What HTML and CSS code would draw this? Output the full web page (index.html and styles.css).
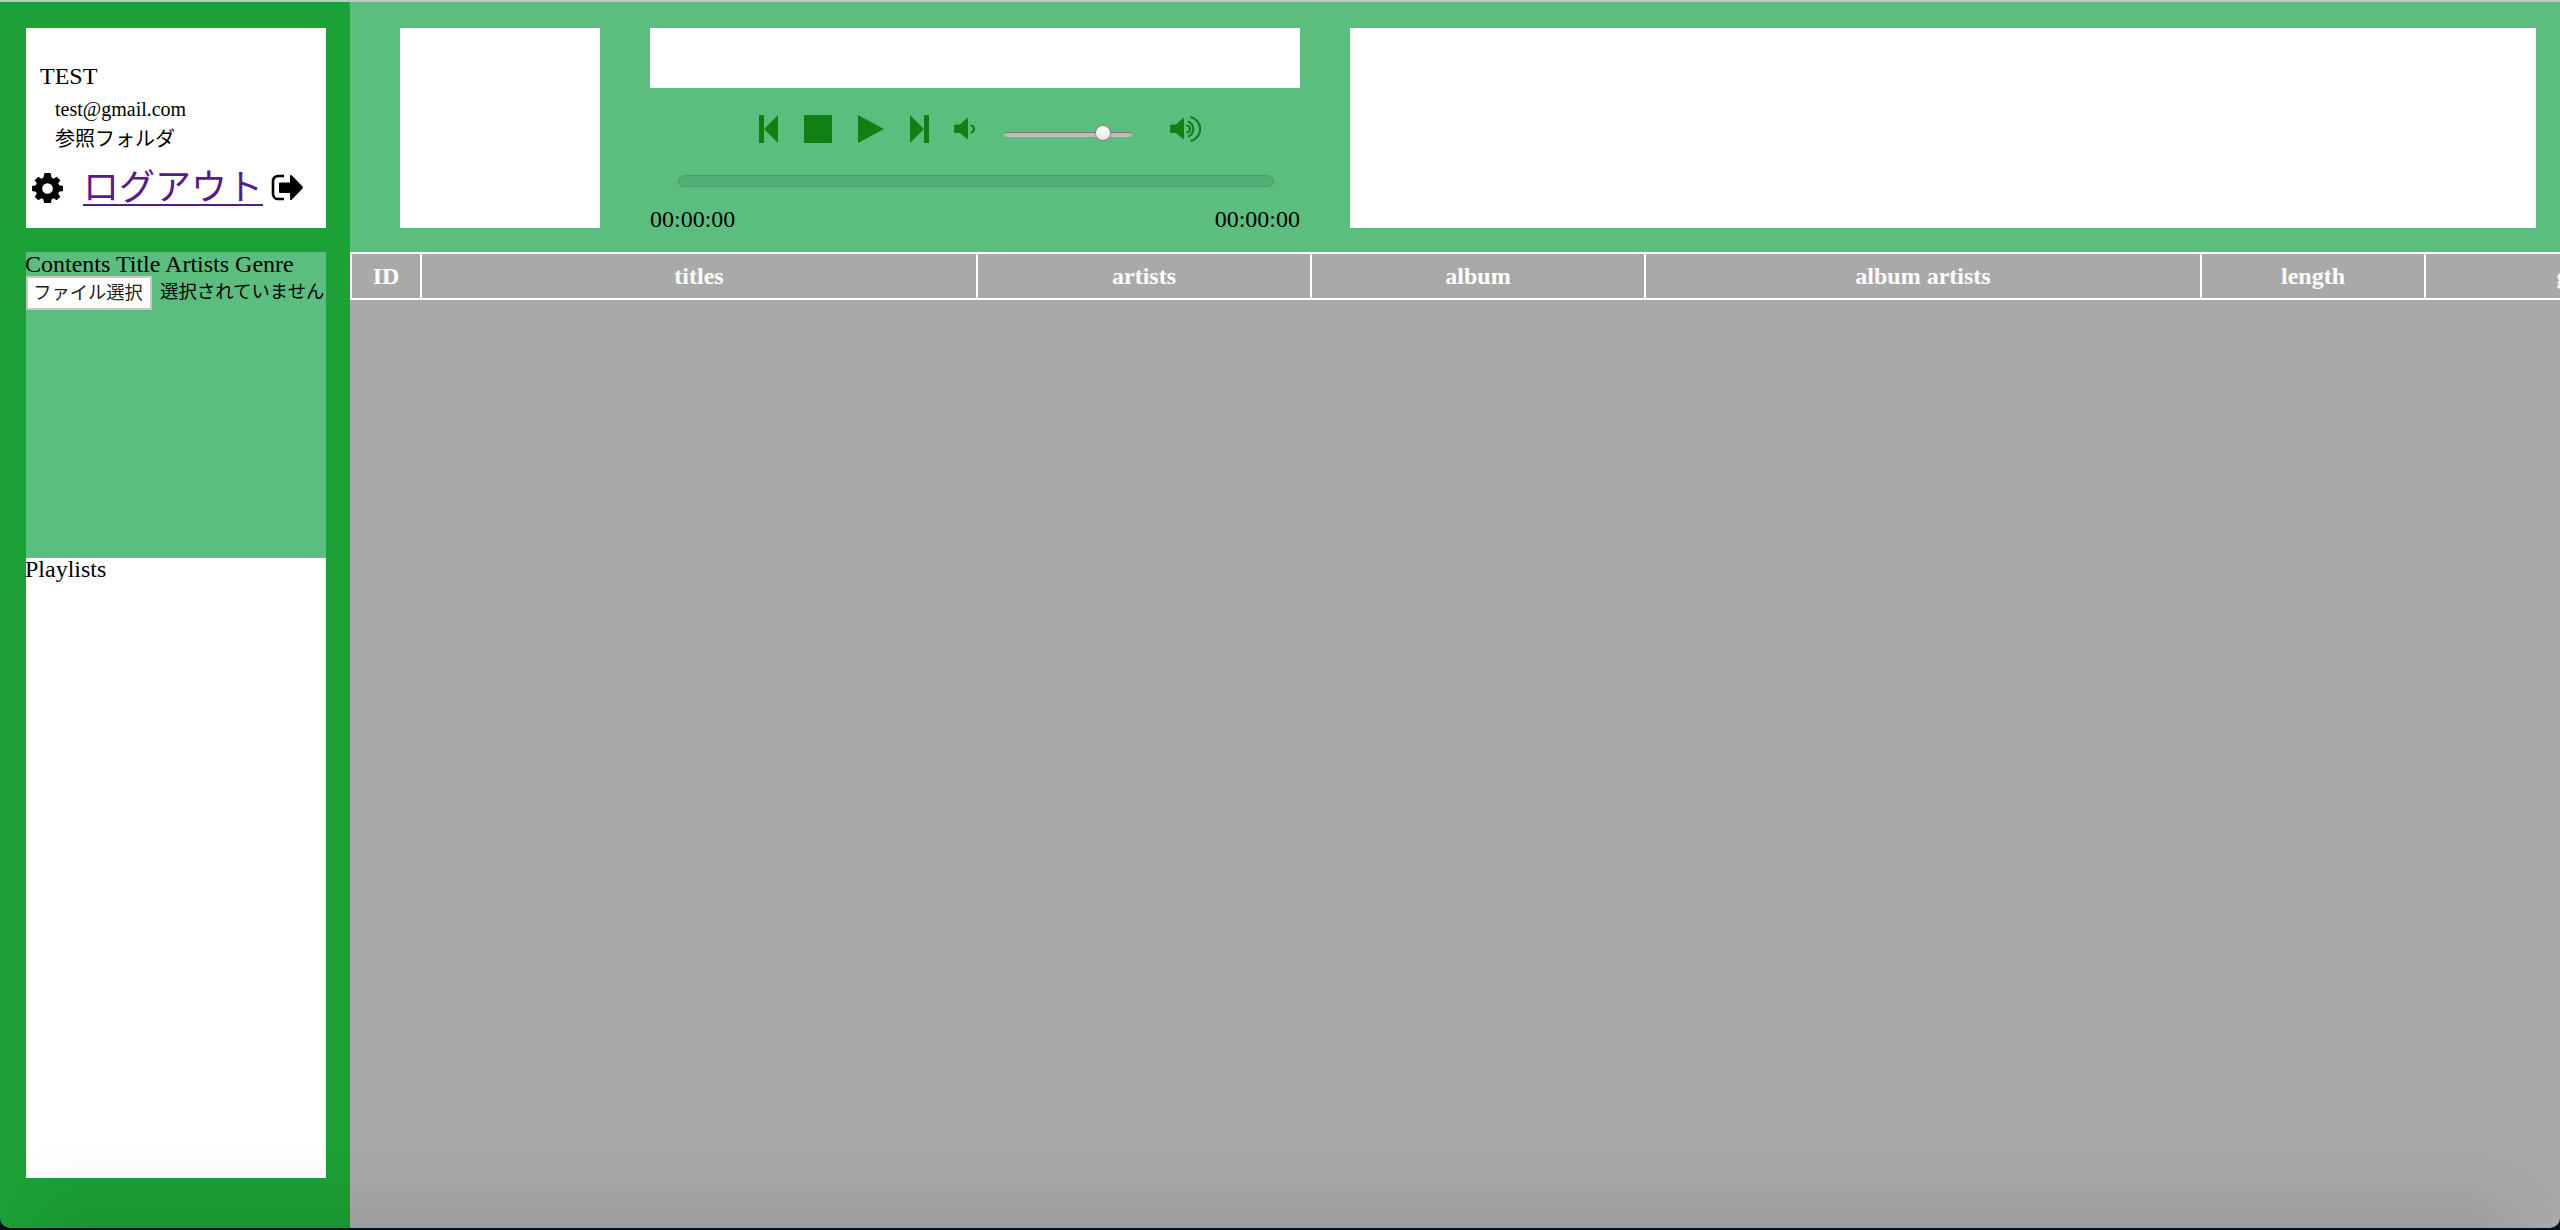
FILE: index.html
```html
<!DOCTYPE html>
<html lang="ja">
<head>
<meta charset="utf-8">
<title>Music Player</title>
<link rel="stylesheet" href="styles.css">
</head>
<body>
<div class="window">
  <aside class="sidebar">
    <section class="account">
      <p class="name">TEST</p>
      <p class="detail">test@gmail.com</p>
      <p class="detail folder">参照フォルダ</p>
      <div class="actions">
        <svg class="gear" viewBox="0 0 32 32"><path fill-rule="evenodd" d="M12.5 1.5 13 0h6l.5 1.500.8 3.500 2 .9 3.200-2.100 3.700 3.700-2.100 3.200.9 2 4 .8v5l-4 .8-.9 2 2.100 3.200-3.700 3.700-3.200-2.100-2 .9-.8 4h-7l-.8-4-2-.9-3.200 2.100-3.700-3.700 2.100-3.200-.9-2-4-.8v-5l4-.8.9-2-2.100-3.200 3.700-3.700 3.200 2.100 2-.9zM16 10.500a5.500 5.500 0 1 0 0 11 5.500 5.500 0 0 0 0-11z"/></svg>
        <a class="logout" href="#">ログアウト</a>
        <svg class="exit" viewBox="0 0 32 28"><path d="M13 2H7a5 5 0 0 0-5 5v13a5 5 0 0 0 5 5h6" fill="none" stroke="#000" stroke-width="2.600"/><path d="M9 8.500h10V1.500q1-1 2 0l10.500 11q1 1 0 2L21 25.500q-1 1-2 0V19H9q-1 0-1-1V9.500q0-1 1-1z"/></svg>
      </div>
    </section>
    <nav class="library">
      <p>Contents Title Artists Genre</p>
      <div class="file"><button class="choose">ファイル選択</button><span>選択されていません</span></div>
    </nav>
    <section class="playlists"><p>Playlists</p></section>
  </aside>
  <main class="main">
    <header class="player">
      <div class="artwork"></div>
      <div class="deck">
        <div class="track"></div>
        <div class="controls">
          <svg class="prev" viewBox="0 0 19 28"><rect width="5" height="28" rx="1"/><path d="M19 0v28L5 14z"/></svg>
          <svg class="stop" viewBox="0 0 28 28"><rect width="28" height="28" rx="1"/></svg>
          <svg class="play" viewBox="0 0 26 28"><path d="M0 0 26 14 0 28z"/></svg>
          <svg class="next" viewBox="0 0 19 28"><rect x="14" width="5" height="28" rx="1"/><path d="M0 0v28l14-14z"/></svg>
          <svg class="low" viewBox="0 0 31 26"><path d="M1.500 8.500H6l6.500-6Q14 1.500 14 3v19q0 1.500-1.500.5L6 17H1.500Q0 17 0 15.500V10q0-1.500 1.500-1.500z"/><path class="wave" d="M16.500 9.500a3.500 3.500 0 0 1 0 7"/></svg>
          <div class="volume"><span class="thumb"></span></div>
          <svg class="high" viewBox="0 0 31 26"><path d="M1.500 8.500H6l6.500-6Q14 1.500 14 3v19q0 1.500-1.500.5L6 17H1.500Q0 17 0 15.500V10q0-1.500 1.500-1.500z"/><path class="wave" d="M16.500 9.500a3.500 3.500 0 0 1 0 7M18 5.500a8 8 0 0 1 0 15M20.500 1a12.300 12.300 0 0 1 0 24"/></svg>
        </div>
        <div class="progress"></div>
        <div class="times"><span>00:00:00</span><span>00:00:00</span></div>
      </div>
      <div class="lyrics"></div>
    </header>
    <table class="songs">
      <colgroup><col class="c-id"><col class="c-wide"><col class="c-mid"><col class="c-mid"><col class="c-wide"><col class="c-len"><col></colgroup>
      <tr><th>ID</th><th>titles</th><th>artists</th><th>album</th><th>album artists</th><th>length</th><th>genre</th></tr>
    </table>
  </main>
</div>
</body>
</html>
```
FILE: styles.css
```css
* { box-sizing: border-box; }
html { background: #04101c; }
body {
  margin: 0;
  height: 1230px;
  overflow: hidden;
  background: #04101c;
  color: #000;
  font: 24px/27px "Liberation Serif", "Noto Sans CJK JP", serif;
}
p { margin: 0; }
svg { display: block; flex: none; }

.window {
  position: relative;
  display: flex;
  width: 2560px;
  height: 1228px;
  border-top: 2px solid #c4c4c4;
  border-radius: 0 0 10px 10px;
  overflow: hidden;
}
.window::after {
  content: "";
  position: absolute;
  inset: auto 0 0 0;
  height: 90px;
  background: linear-gradient(transparent, rgba(0, 0, 0, .015) 40%, rgba(0, 0, 0, .07));
  mask-image: linear-gradient(90deg, transparent, #000 90px, #000 2470px, transparent);
}

.sidebar { flex: none; width: 350px; padding: 26px 24px 0 26px; background: #1ba135; }
.account { height: 200px; padding-top: 35px; background: #fff; }
.name { padding-left: 14px; }
.detail { height: 28px; margin-top: 5px; padding-left: 29px; font-size: 20px; line-height: 28px; }
.folder { margin-top: 2px; }
.actions { display: flex; align-items: center; height: 52px; margin-top: 9px; padding-left: 6px; }
.gear { width: 31px; height: 31px; }
.logout { width: 180px; margin: 0 8px 0 20px; color: #551a8b; font-size: 36px; line-height: 44px; text-decoration-thickness: 2px; text-underline-offset: 4px; white-space: nowrap; }
.exit { width: 32px; height: 28px; }
.library { height: 306px; margin-top: 24px; background: #5bbe7f; white-space: nowrap; }
.library p, .playlists p { margin-left: -1px; line-height: 24px; }
.playlists p { line-height: 23px; }
.file { display: flex; gap: 8px; font: 18.400px/28px "Noto Sans CJK JP", sans-serif; }
.choose { flex: none; width: 126px; height: 34px; padding: 0 2px 5px 0; border: 2px solid #c8c8c8; background: #fff; color: #222; font: 18.300px/26px "Noto Sans CJK JP", sans-serif; }
.playlists { height: 620px; background: #fff; }

.main { flex: 1; min-width: 0; background: #a9a9a9; overflow: hidden; }
.player { display: flex; height: 250px; padding: 26px 24px 0 50px; background: #5bbe7f; }
.artwork { width: 200px; height: 200px; background: #fff; }
.deck { width: 650px; margin: 0 50px; }
.track { height: 60px; background: #fff; }
.controls { display: flex; align-items: center; height: 82px; padding-left: 109px; fill: #108012; }
.prev, .next { width: 19px; height: 28px; }
.stop { width: 28px; height: 28px; margin-left: 26px; }
.play { width: 26px; height: 28px; margin-left: 26px; }
.next { margin-left: 26px; }
.low, .high { width: 31px; height: 26px; }
.low { margin-left: 25px; }
.wave { fill: none; stroke: #108012; stroke-width: 2.200; }
.volume { position: relative; width: 128px; height: 5px; margin: 10px 38px 0 19px; border-top: 1px solid #777; border-radius: 3px; background: #bdbdbd; }
.thumb { position: absolute; left: 92px; top: -7px; width: 14px; height: 14px; border-radius: 50%; background: linear-gradient(#fff, #e4e4e4); box-shadow: 0 0 1px 1px #888; }
.progress { width: 596px; height: 12px; margin: 5px 0 0 28px; border: 1px solid #4a9d69; border-radius: 6px; background: #53af76; }
.times { display: flex; justify-content: space-between; margin-top: 19px; }
.lyrics { flex: 1; height: 200px; background: #fff; }

.songs { width: 2396px; table-layout: fixed; border-collapse: collapse; color: #fff; }
.songs th { height: 46px; padding: 0; border: 2px solid #fff; font-weight: bold; line-height: 27px; }
.c-id { width: 70px; }
.c-wide { width: 556px; }
.c-mid { width: 334px; }
.c-len { width: 224px; }
```
